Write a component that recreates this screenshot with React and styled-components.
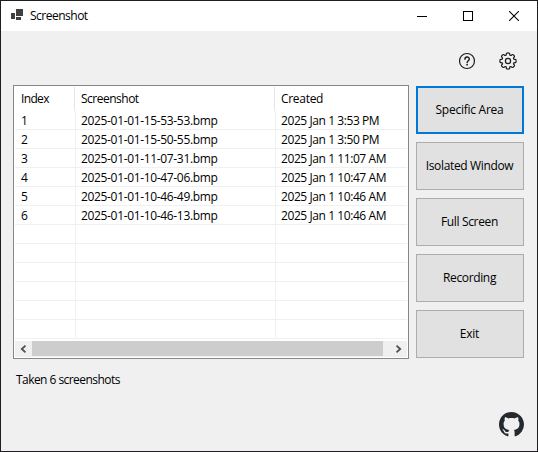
import React from "react";
import styled, { createGlobalStyle } from "styled-components";

const GlobalStyle = createGlobalStyle`
  *, *::before, *::after { box-sizing: border-box; }
  body { margin: 0; background: #f0f0f0; overflow: hidden; }
`;

const Window = styled.div`
  width: 538px;
  height: 452px;
  display: flex;
  flex-direction: column;
  border: 1px solid #1f1d20;
  background: #f0f0f0;
  color: #000;
  font: 12px/18px "Open Sans", sans-serif;
`;

const Text = styled.span`
  white-space: pre;
  letter-spacing: ${(p) => p.$track ?? -0.2}px;
`;

const TitleBar = styled.header`
  flex: none;
  height: 30px;
  display: flex;
  align-items: center;
  background: #fff;
  padding-left: 10px;
`;

const AppIcon = styled.svg`
  width: 12px;
  height: 11px;
  margin: 0 7px 3px 0;
`;

const Controls = styled.div`
  margin-left: auto;
  display: flex;
`;

const Control = styled.button`
  width: 46px;
  height: 30px;
  padding: 0;
  border: 0;
  background: none;
  display: grid;
  place-items: center;
`;

const Toolbar = styled.div`
  flex: none;
  height: 54px;
  padding: 20px 19px 0 0;
  display: flex;
  justify-content: flex-end;
  align-items: flex-start;
  gap: 21px;
`;

const IconButton = styled.button`
  width: 20px;
  height: 20px;
  padding: 0;
  border: 0;
  background: none;
  svg { display: block; }
`;

const Main = styled.main`
  flex: none;
  display: flex;
  gap: 7px;
  padding-left: 12px;
`;

const ListView = styled.section`
  width: 396px;
  height: 274px;
  border: 1px solid #828790;
  background: #fff;
  padding: 1px;
`;

const ListHeader = styled.div`
  display: grid;
  grid-template-columns: 60px 200px 1fr;
  height: 24px;
`;

const HeaderCell = styled.div`
  padding: 3px 0 0 6px;
  border-right: 1px solid ${(p) => (p.$last ? "transparent" : "#e5e5e5")};
`;

const Row = styled.div`
  display: grid;
  grid-template-columns: 61px 200px 1fr;
  height: 19px;
  border-bottom: 1px solid #f0f0f0;
`;

const Cell = styled.div`
  height: 19px;
  padding-left: ${(p) => (p.$first ? 6 : 5)}px;
  border-right: 1px solid ${(p) => (p.$last ? "transparent" : "#f0f0f0")};
  line-height: 19px;
`;

const ScrollBar = styled.div`
  margin-top: 2px;
  height: 16px;
  display: flex;
  background: #f0f0f0;
`;

const ScrollArrow = styled.div`
  width: ${(p) => p.$width}px;
  display: flex;
  align-items: center;
  justify-content: ${(p) => (p.$end ? "flex-end" : "flex-start")};
  padding: 0 5px;
`;

const Thumb = styled.div`
  flex: 1;
  height: 15px;
  background: #cdcdcd;
`;

const Actions = styled.nav`
  display: flex;
  flex-direction: column;
  gap: 8px;
  padding-top: 1px;
`;

const ActionButton = styled.button`
  width: 108px;
  height: 48px;
  padding: 0 1px 1px 0;
  border: ${(p) => (p.$focused ? "2px solid #0078d7" : "1px solid #adadad")};
  background: #e1e1e1;
  color: #000;
  font: inherit;
`;

const Footer = styled.footer`
  flex: 1;
  display: flex;
  justify-content: space-between;
  padding: 12px 13px 0 15px;
`;

const GitHubLink = styled.span`
  align-self: flex-end;
  height: 25px;
  margin-bottom: 14px;
  svg { display: block; }
`;

const shots = [
  ["1", "2025-01-01-15-53-53.bmp", "2025 Jan 1 3:53 PM"],
  ["2", "2025-01-01-15-50-55.bmp", "2025 Jan 1 3:50 PM"],
  ["3", "2025-01-01-11-07-31.bmp", "2025 Jan 1 11:07 AM"],
  ["4", "2025-01-01-10-47-06.bmp", "2025 Jan 1 10:47 AM"],
  ["5", "2025-01-01-10-46-49.bmp", "2025 Jan 1 10:46 AM"],
  ["6", "2025-01-01-10-46-13.bmp", "2025 Jan 1 10:46 AM"],
];
const rows = [...shots, ...Array.from({ length: 6 }, () => ["", "", ""])];

const actions = [
  ["Specific Area", -0.25],
  ["Isolated Window", -0.35],
  ["Full Screen", -0.35],
  ["Recording", -0.35],
  ["Exit", -0.25],
];

// Outline of an eight-toothed cog, curved through the midpoints of its sides.
function cogPath(cx, cy) {
  const pts = [];
  for (let i = 0; i < 8; i++) {
    const a = (i * Math.PI) / 4;
    [[-0.25, 6.1], [-0.22, 8.3], [0.22, 8.3], [0.25, 6.1]].forEach(([d, r]) =>
      pts.push([cx + r * Math.sin(a + d), cy - r * Math.cos(a + d)])
    );
  }
  const mid = (p, q) => `${((p[0] + q[0]) / 2).toFixed(2)} ${((p[1] + q[1]) / 2).toFixed(2)}`;
  const last = pts[pts.length - 1];
  return (
    `M${mid(last, pts[0])}` +
    pts
      .map((p, i) => `Q${p[0].toFixed(2)} ${p[1].toFixed(2)} ${mid(p, pts[(i + 1) % pts.length])}`)
      .join("") +
    "Z"
  );
}

export default function App() {
  return (
    <Window>
      <GlobalStyle />
      <TitleBar>
        <AppIcon viewBox="0 0 12 11" fill="#404040" shapeRendering="crispEdges">
          <rect x="5" y="0" width="7" height="7" />
          <rect x="0" y="4" width="4" height="6" />
          <rect x="5" y="8" width="5" height="3" />
        </AppIcon>
        <Text $track={-0.5}>Screenshot</Text>
        <Controls>
          <Control aria-label="Minimize">
            <svg width="10" height="10" shapeRendering="crispEdges"><rect y="5" width="10" height="1" /></svg>
          </Control>
          <Control aria-label="Maximize">
            <svg width="10" height="10"><rect x=".5" y=".5" width="9" height="9" fill="none" stroke="#000" /></svg>
          </Control>
          <Control aria-label="Close">
            <svg width="10" height="10"><path d="M0 0L10 10M10 0L0 10" stroke="#000" strokeWidth="1.05" /></svg>
          </Control>
        </Controls>
      </TitleBar>
      <Toolbar>
        <IconButton aria-label="Help">
          <svg width="20" height="20" fill="none" stroke="#1c1c1c" strokeWidth="1.2" strokeLinecap="round">
            <circle cx="10" cy="10" r="7.5" />
            <path d="M7.9 8.2C7.9 5.3 12.3 5.3 12.3 8C12.3 9.7 10.1 9.7 10.1 11.6" strokeWidth="1.4" />
            <circle cx="10.1" cy="13.7" r=".9" fill="#1c1c1c" stroke="none" />
          </svg>
        </IconButton>
        <IconButton aria-label="Settings">
          <svg width="20" height="20" fill="none" stroke="#1c1c1c" strokeWidth="1.2" strokeLinejoin="round">
            <path d={cogPath(10, 10)} />
            <circle cx="10" cy="10" r="2.6" />
          </svg>
        </IconButton>
      </Toolbar>
      <Main>
        <ListView>
          <ListHeader>
            <HeaderCell><Text $track={-0.65}>Index</Text></HeaderCell>
            <HeaderCell><Text $track={-0.5}>Screenshot</Text></HeaderCell>
            <HeaderCell $last><Text $track={-0.3}>Created</Text></HeaderCell>
          </ListHeader>
          {rows.map((r, i) => (
            <Row key={i}>
              <Cell $first><Text>{r[0]}</Text></Cell>
              <Cell><Text $track={-0.34}>{r[1]}</Text></Cell>
              <Cell $last><Text $track={-0.42}>{r[2]}</Text></Cell>
            </Row>
          ))}
          <ScrollBar>
            <ScrollArrow $width={17}>
              <svg width="7" height="8"><path d="M5.5 .7L1.8 4L5.5 7.3" fill="none" stroke="#505050" strokeWidth="1.8" /></svg>
            </ScrollArrow>
            <Thumb />
            <ScrollArrow $width={24} $end>
              <svg width="7" height="8"><path d="M1.5 .7L5.2 4L1.5 7.3" fill="none" stroke="#505050" strokeWidth="1.8" /></svg>
            </ScrollArrow>
          </ScrollBar>
        </ListView>
        <Actions>
          {actions.map(([label, track], i) => (
            <ActionButton key={label} $focused={i === 0}><Text $track={track}>{label}</Text></ActionButton>
          ))}
        </Actions>
      </Main>
      <Footer>
        <Text $track={-0.55}>Taken 6 screenshots</Text>
        <GitHubLink>
          <svg width="25" height="25" viewBox="0 0 16 16" fill="#24292f">
            <path d="M8 0C3.58 0 0 3.58 0 8c0 3.54 2.29 6.53 5.47 7.59.4.07.55-.17.55-.38 0-.19-.01-.82-.01-1.49-2.01.37-2.53-.49-2.69-.94-.09-.23-.48-.94-.82-1.13-.28-.15-.68-.52-.01-.53.63-.01 1.08.58 1.23.82.72 1.21 1.87.87 2.33.66.07-.52.28-.87.51-1.07-1.78-.2-3.64-.89-3.64-3.95 0-.87.31-1.59.82-2.15-.08-.2-.36-1.02.08-2.12 0 0 .67-.21 2.2.82.64-.18 1.32-.27 2-.27s1.36.09 2 .27c1.53-1.04 2.2-.82 2.2-.82.44 1.1.16 1.92.08 2.12.51.56.82 1.27.82 2.15 0 3.07-1.87 3.75-3.65 3.95.29.25.54.73.54 1.48 0 1.07-.01 1.93-.01 2.2 0 .21.15.46.55.38A8.01 8.01 0 0 0 16 8c0-4.42-3.58-8-8-8Z" />
          </svg>
        </GitHubLink>
      </Footer>
    </Window>
  );
}
